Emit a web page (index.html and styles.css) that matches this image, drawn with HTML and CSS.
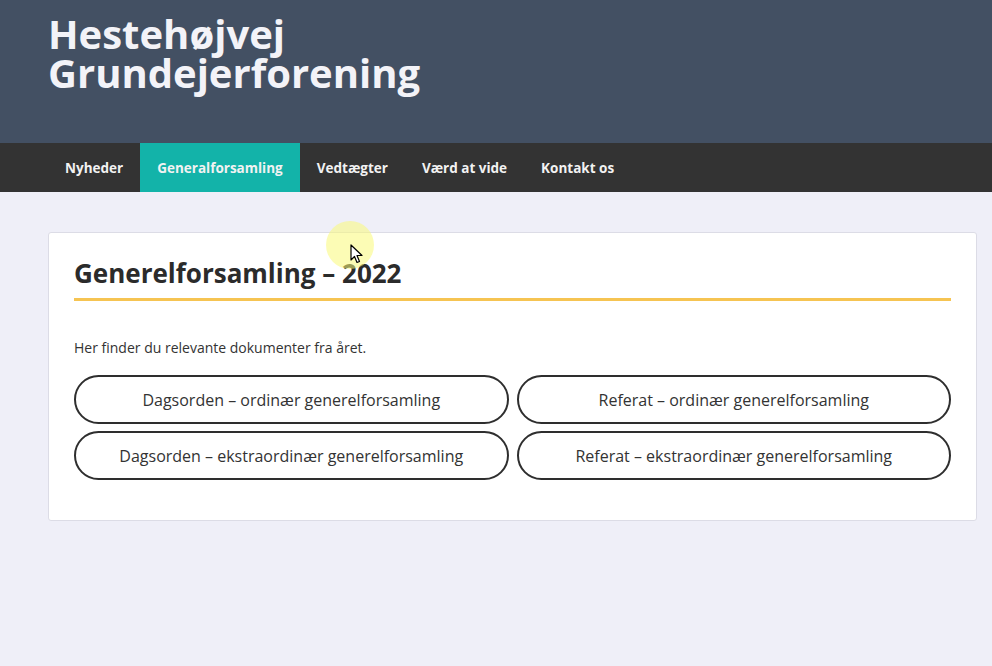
FILE: index.html
```html
<!DOCTYPE html>
<html lang="da">
<head>
<meta charset="utf-8">
<title>Hestehøjvej Grundejerforening</title>
<link rel="stylesheet" href="styles.css">
</head>
<body>
<header class="site-header">
  <h1 class="site-title"><span class="title-line">Hestehøjvej</span><span class="title-line">Grundejerforening</span></h1>
</header>
<nav class="main-nav">
  <a class="nav-item" href="#">Nyheder</a>
  <a class="nav-item active" href="#">Generalforsamling</a>
  <a class="nav-item" href="#">Vedtægter</a>
  <a class="nav-item" href="#">Værd at vide</a>
  <a class="nav-item" href="#">Kontakt os</a>
</nav>
<main class="content">
  <section class="card">
    <h2 class="card-title">Generelforsamling – 2022</h2>
    <p class="intro">Her finder du relevante dokumenter fra året.</p>
    <div class="doc-grid">
      <a class="doc-btn" href="#">Dagsorden – ordinær generelforsamling</a>
      <a class="doc-btn" href="#">Referat – ordinær generelforsamling</a>
      <a class="doc-btn" href="#">Dagsorden – ekstraordinær generelforsamling</a>
      <a class="doc-btn" href="#">Referat – ekstraordinær generelforsamling</a>
    </div>
  </section>
</main>
<div class="cursor-spot">
  <svg class="cursor-arrow" width="13" height="20" viewBox="0 0 13 20"><path d="M1 1 L1 16 L4.5 12.5 L7 18.5 L9.5 17.5 L7 11.5 L12 11.5 Z" fill="#fff" stroke="#000" stroke-width="1.2" stroke-linejoin="round"/></svg>
</div>
</body>
</html>
```
FILE: styles.css
```css
* { box-sizing: border-box; }
html, body { margin: 0; padding: 0; }
body {
  background: #efeff8;
  font-family: "Open Sans", "Noto Sans", sans-serif;
  color: #333;
  min-height: 666px;
  position: relative;
}
.site-header {
  background: #435063;
  height: 143px;
  padding: 14px 48px 0;
}
.site-title {
  margin: 0;
  color: #f3f3f8;
  font-weight: 700;
  font-size: 40px;
  line-height: 39px;
  display: flex;
  flex-direction: column;
  align-items: flex-start;
}
.title-line { display: block; height: 39px; }
.main-nav {
  background: #333333;
  height: 49px;
  display: flex;
  padding-left: 48px;
}
.nav-item {
  display: flex;
  align-items: center;
  padding: 0 17px;
  color: #f2f2f2;
  text-decoration: none;
  font-size: 13.5px;
  font-weight: 700;
}
.nav-item.active { background: #13b3a9; }
.content {
  padding: 40px 15px 40px 48px;
}
.card {
  background: #fff;
  border: 1px solid #dcdce6;
  border-radius: 3px;
  padding: 25px 25px 40px;
}
.card-title {
  margin: 0;
  font-size: 26px;
  font-weight: 700;
  color: #2b2b2b;
  line-height: 30px;
  padding-bottom: 10px;
  border-bottom: 3px solid #f6c452;
}
.intro {
  margin: 36px 0 0;
  font-size: 14px;
  line-height: 22px;
  color: #333;
}
.doc-grid {
  margin-top: 16px;
  display: grid;
  grid-template-columns: 1fr 1fr;
  gap: 7px 8px;
}
.doc-btn {
  height: 49px;
  border: 2px solid #2e2e2e;
  border-radius: 25px;
  display: flex;
  align-items: center;
  justify-content: center;
  font-size: 16px;
  color: #333;
  text-decoration: none;
}
.cursor-spot {
  position: absolute;
  left: 326px;
  top: 221px;
  width: 48px;
  height: 48px;
  border-radius: 50%;
  background: rgba(250, 250, 120, 0.55);
}
.cursor-arrow {
  position: absolute;
  left: 24px;
  top: 23px;
}
```
